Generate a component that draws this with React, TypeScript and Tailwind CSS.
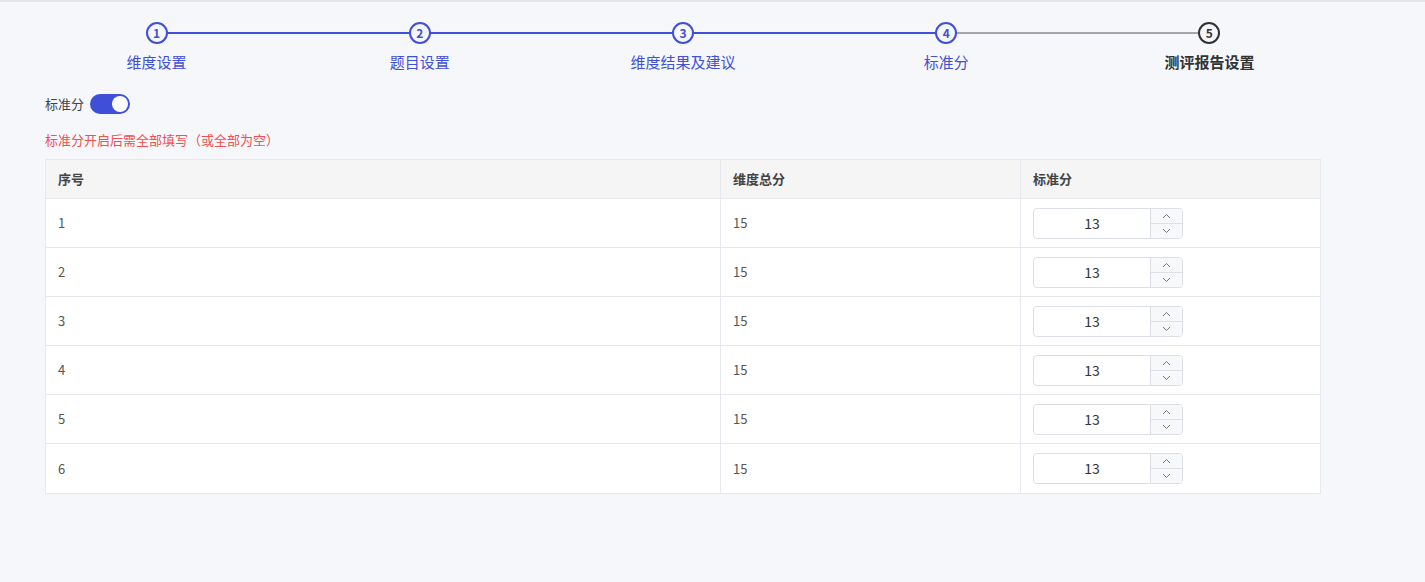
import React from "react";

const steps = ["维度设置", "题目设置", "维度结果及建议", "标准分", "测评报告设置"];

export default function App() {
  return (
    <div className="w-[1425px] h-[582px] bg-[#f6f7fb] border-t-2 border-[#e3e5ea] overflow-hidden" style={{ fontFamily: '"Noto Sans CJK SC", "Liberation Sans", sans-serif' }}>
      <div className="flex pl-[25px] w-[1341px] pt-[20px]">
        {steps.map((s, i) => {
          const active = i < 4;
          const last = i === 4;
          return (
            <div key={i} className="relative flex-1 flex flex-col items-center">
              {i < 4 && (
                <div className={`absolute top-[10px] left-1/2 w-full h-[2px] ${i < 3 ? "bg-[#3f4fd8]" : "bg-[#a4a6ad]"}`} />
              )}
              <div className={`relative z-10 w-[22px] h-[22px] rounded-full border-2 bg-[#f6f7fb] flex items-center justify-center text-[12px] font-bold ${last ? "border-[#333] text-[#333]" : "border-[#3f4fd8] text-[#3f4fd8]"}`}>{i + 1}</div>
              <div className={`mt-[8px] text-[15px] leading-[20px] ${active ? "text-[#3f4fd8]" : "text-[#333] font-bold"}`}>{s}</div>
            </div>
          );
        })}
      </div>
      <div className="pl-[45px] mt-[22px] flex items-center gap-[6px] text-[13px] text-[#444]">
        <span>标准分</span>
        <div className="w-[40px] h-[20px] rounded-full bg-[#3f4fd8] flex items-center justify-end pr-[2px]">
          <div className="w-[16px] h-[16px] rounded-full bg-white" />
        </div>
      </div>
      <div className="pl-[45px] mt-[16px] text-[13px] text-[#f0504e] leading-[20px]">标准分开启后需全部填写（或全部为空）</div>
      <div className="ml-[45px] mt-[9px] w-[1276px] border border-[#e6e8ee] bg-white text-[13px]">
        <div className="flex h-[39px] bg-[#f5f5f6] font-bold text-[#444] border-b border-[#e6e8ee]">
          <div className="w-[675px] px-[12px] flex items-center border-r border-[#e6e8ee]">序号</div>
          <div className="w-[300px] px-[12px] flex items-center border-r border-[#e6e8ee]">维度总分</div>
          <div className="flex-1 px-[12px] flex items-center">标准分</div>
        </div>
        {[1, 2, 3, 4, 5, 6].map((n) => (
          <div key={n} className="flex h-[49px] text-[#555] border-b border-[#e6e8ee] last:border-b-0">
            <div className="w-[675px] px-[12px] flex items-center border-r border-[#e6e8ee]">{n}</div>
            <div className="w-[300px] px-[12px] flex items-center border-r border-[#e6e8ee]">15</div>
            <div className="flex-1 px-[12px] flex items-center">
              <div className="flex w-[150px] h-[31px] border border-[#dcdfe6] rounded-[4px] overflow-hidden">
                <div className="flex-1 flex items-center justify-center text-[#333] text-[14px]">13</div>
                <div className="w-[32px] border-l border-[#dcdfe6] bg-[#f7f8fa] flex flex-col text-[#777]">
                  <div className="flex-1 flex items-center justify-center border-b border-[#dcdfe6]">
                    <svg width="9" height="6" viewBox="0 0 9 6"><path d="M1 5 L4.5 1.5 L8 5" fill="none" stroke="currentColor" strokeWidth="1" /></svg>
                  </div>
                  <div className="flex-1 flex items-center justify-center">
                    <svg width="9" height="6" viewBox="0 0 9 6"><path d="M1 1 L4.5 4.5 L8 1" fill="none" stroke="currentColor" strokeWidth="1" /></svg>
                  </div>
                </div>
              </div>
            </div>
          </div>
        ))}
      </div>
    </div>
  );
}
